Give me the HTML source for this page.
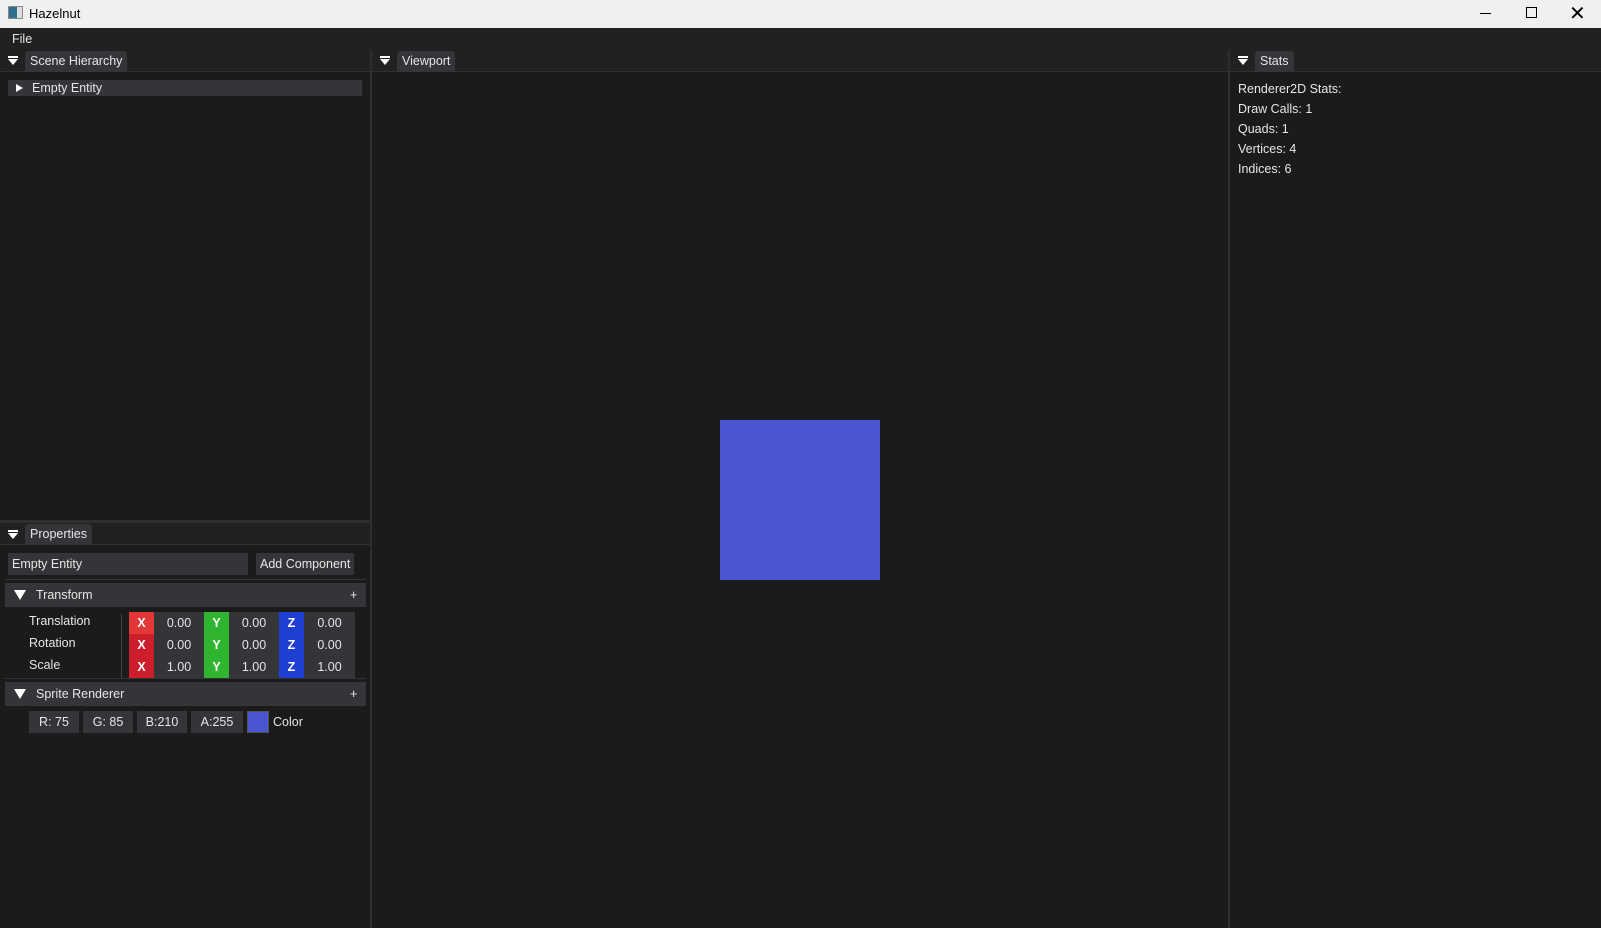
<!DOCTYPE html><html><head><style>
*{margin:0;padding:0;box-sizing:border-box}
body{width:1601px;height:928px;background:#1b1b1b;font-family:"Liberation Sans",sans-serif;font-size:12.5px;color:#e6e6e6;position:relative;overflow:hidden;white-space:nowrap}
.a{position:absolute}
.tab{background:#333538;border-radius:4px 4px 0 0;padding:3px 5px 0 5px;height:21px}
.tri{width:0;height:0;border-left:5px solid transparent;border-right:5px solid transparent;border-top:6px solid #fff}
.bar{border-top:2px solid #fff;width:10px}
.box{background:#333538;text-align:center;line-height:22px}
.lbl{color:#fff;font-weight:bold;text-align:center;line-height:22px;width:25px}
</style></head><body>
<div class="a" style="left:0;top:0;width:1601px;height:28px;background:#f0f0f0;color:#000">
<div class="a" style="left:8px;top:6px;width:15px;height:13px;border:1px solid #888;background:linear-gradient(90deg,#2f6f8f 60%,#ddd 60%)"></div>
<div class="a" style="left:29px;top:6px;font-size:13px">Hazelnut</div>
<div class="a" style="left:1480px;top:13px;width:11px;height:1px;background:#000"></div>
<div class="a" style="left:1526px;top:7px;width:11px;height:11px;border:1px solid #000"></div>
<div class="a" style="left:1569px;top:1px;font-size:20px;font-weight:200">✕</div>
</div>
<div class="a" style="left:0;top:28px;width:1601px;height:22px;background:#212121"><span class="a" style="left:12px;top:4px">File</span></div>
<div class="a" style="left:0;top:50px;width:1601px;height:22px;background:#212121"></div>
<div class="a" style="left:0;top:71px;width:1601px;height:1px;background:#2f3134"></div>
<div class="a" style="left:370px;top:50px;width:2px;height:878px;background:#2e2e2e"></div>
<div class="a" style="left:1228px;top:50px;width:2px;height:878px;background:#2e2e2e"></div>
<div class="a" style="left:8px;top:56px"><div class="bar"></div><div class="tri" style="margin-top:1px"></div></div>
<div class="a tab" style="left:25px;top:51px">Scene Hierarchy</div>
<div class="a" style="left:380px;top:56px"><div class="bar"></div><div class="tri" style="margin-top:1px"></div></div>
<div class="a tab" style="left:397px;top:51px">Viewport</div>
<div class="a" style="left:1238px;top:56px"><div class="bar"></div><div class="tri" style="margin-top:1px"></div></div>
<div class="a tab" style="left:1255px;top:51px">Stats</div>
<div class="a" style="left:8px;top:80px;width:354px;height:16px;background:#333538"></div>
<div class="a" style="left:16px;top:84px;width:0;height:0;border-top:4px solid transparent;border-bottom:4px solid transparent;border-left:7px solid #fff"></div>
<div class="a" style="left:32px;top:81px">Empty Entity</div>
<div class="a" style="left:1238px;top:79px;line-height:20px">Renderer2D Stats:<br>Draw Calls: 1<br>Quads: 1<br>Vertices: 4<br>Indices: 6</div>
<div class="a" style="left:720px;top:420px;width:160px;height:160px;background:#4b55d2"></div>
<div class="a" style="left:0;top:520px;width:370px;height:3px;background:#2e2e2e"></div>
<div class="a" style="left:0;top:523px;width:370px;height:21px;background:#212121"></div>
<div class="a" style="left:0;top:544px;width:370px;height:1px;background:#2f3134"></div>
<div class="a" style="left:8px;top:530px"><div class="bar"></div><div class="tri" style="margin-top:1px"></div></div>
<div class="a tab" style="left:25px;top:524px">Properties</div>
<div class="a" style="left:8px;top:553px;width:240px;height:22px;background:#333538;padding:4px 4px">Empty Entity</div>
<div class="a" style="left:256px;top:553px;width:98px;height:22px;background:#333538;padding:4px 4px">Add Component</div>
<div class="a" style="left:5px;top:579px;width:361px;height:1px;background:#333"></div>
<div class="a" style="left:5px;top:583px;width:361px;height:24px;background:#333538"></div>
<div class="a tri" style="left:14px;top:590px;border-left-width:6px;border-right-width:6px;border-top-width:10px"></div>
<div class="a" style="left:36px;top:588px">Transform</div><div class="a" style="left:350px;top:588px">+</div>
<div class="a" style="left:29px;top:610px;line-height:22px">Translation<br>Rotation<br>Scale</div>
<div class="a" style="left:121px;top:614px;width:1px;height:64px;background:#444"></div>
<div class="a" style="left:129px;top:612px;width:226px;height:66px;background:#333538"></div>
<div class="a" style="left:129px;top:612px;line-height:22px">
<div style="display:flex"><div class="lbl" style="background:#e33838">X</div><div class="box" style="width:50px">0.00</div><div class="lbl" style="background:#2fb52f">Y</div><div class="box" style="width:50px">0.00</div><div class="lbl" style="background:#1f3fd0">Z</div><div class="box" style="width:51px">0.00</div></div>
<div style="display:flex"><div class="lbl" style="background:#cc1f2b">X</div><div class="box" style="width:50px">0.00</div><div class="lbl" style="background:#2fb52f">Y</div><div class="box" style="width:50px">0.00</div><div class="lbl" style="background:#1f3fd0">Z</div><div class="box" style="width:51px">0.00</div></div>
<div style="display:flex"><div class="lbl" style="background:#cc1f2b">X</div><div class="box" style="width:50px">1.00</div><div class="lbl" style="background:#2fb52f">Y</div><div class="box" style="width:50px">1.00</div><div class="lbl" style="background:#1f3fd0">Z</div><div class="box" style="width:51px">1.00</div></div>
</div>
<div class="a" style="left:5px;top:678px;width:361px;height:1px;background:#333"></div>
<div class="a" style="left:5px;top:682px;width:361px;height:24px;background:#333538"></div>
<div class="a tri" style="left:14px;top:689px;border-left-width:6px;border-right-width:6px;border-top-width:10px"></div>
<div class="a" style="left:36px;top:687px">Sprite Renderer</div><div class="a" style="left:350px;top:687px">+</div>
<div class="a box" style="left:29px;top:711px;width:50px">R: 75</div>
<div class="a box" style="left:83px;top:711px;width:50px">G: 85</div>
<div class="a box" style="left:137px;top:711px;width:50px">B:210</div>
<div class="a box" style="left:191px;top:711px;width:52px">A:255</div>
<div class="a" style="left:247px;top:711px;width:22px;height:22px;background:#4b55d2;border:1px solid #555"></div>
<div class="a" style="left:273px;top:715px">Color</div>
</body></html>
